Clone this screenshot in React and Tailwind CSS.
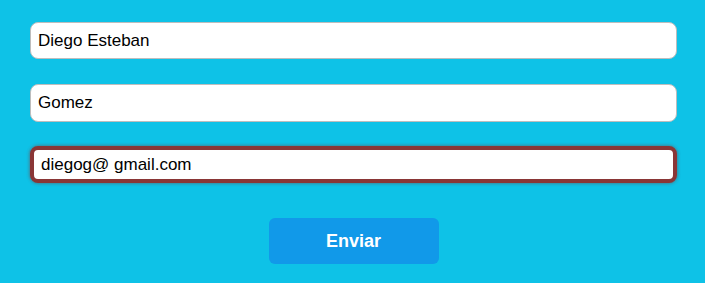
export default function App() {
  return (
    <div className="w-[705px] h-[283px] bg-[#0ec2e7] pl-[30px] pr-[28px] pt-[22px] font-['Liberation_Sans',Arial,sans-serif]">
      <div className="flex flex-col">
        <input
          readOnly
          value="Diego Esteban"
          className="h-[37px] w-full rounded-[8px] border border-[#bdbdbd] bg-white px-[7px] text-[17px] text-black outline-none"
        />
        <input
          readOnly
          value="Gomez"
          className="mt-[25px] h-[38px] w-full rounded-[8px] border border-[#bdbdbd] bg-white px-[7px] text-[17px] text-black outline-none"
        />
        <input
          readOnly
          value="diegog@ gmail.com"
          className="mt-[24px] h-[37px] w-full rounded-[8px] border-[4px] border-[#8a3636] bg-white px-[7px] text-[17px] text-black outline-none shadow-[0_0_3px_1px_rgba(120,60,60,0.45)]"
        />
        <div className="mt-[35px] flex justify-center">
          <button className="h-[46px] w-[170px] rounded-[6px] bg-[#1199e9] text-[18px] font-bold text-white">
            Enviar
          </button>
        </div>
      </div>
    </div>
  );
}
